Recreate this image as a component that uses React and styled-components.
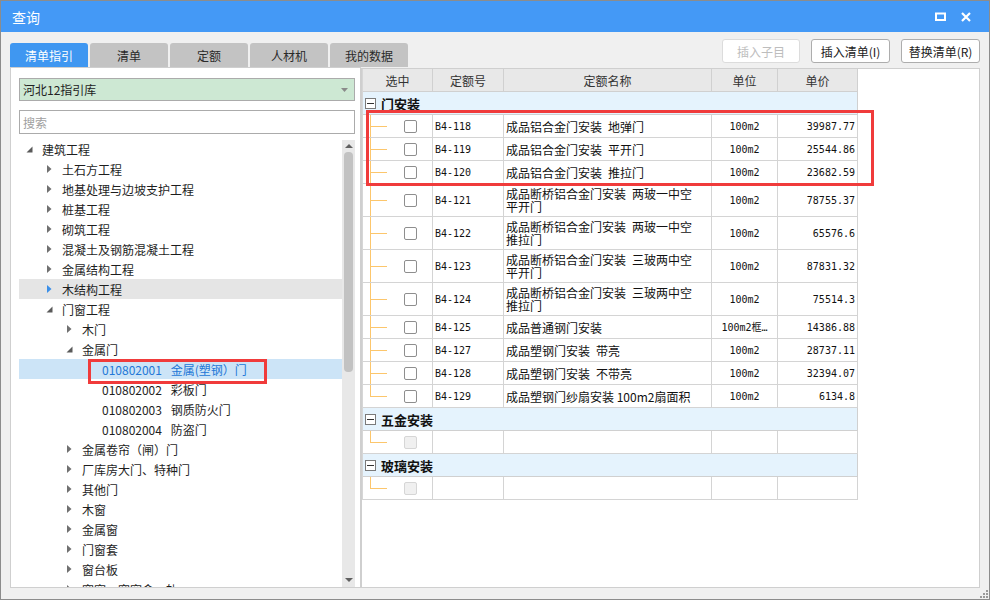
import React from "react";
import styled, { createGlobalStyle } from "styled-components";

const GlobalStyle = createGlobalStyle`
  html, body { margin: 0; padding: 0; background: #fff; }
  body {
    font-family: "Noto Sans CJK SC", "Noto Sans", sans-serif;
    font-size: 12px;
    color: #222;
  }
  * { box-sizing: border-box; }
`;

const MONO = `"DejaVu Sans Mono", "Noto Sans CJK SC", monospace`;

const Window = styled.div`
  position: relative;
  width: 990px;
  height: 600px;
  display: flex;
  flex-direction: column;
  background: #f0f0f0;
  border: 1px solid #8c8c8c;
  overflow: hidden;
`;

const TitleBar = styled.div`
  flex: none;
  height: 31px;
  display: flex;
  align-items: center;
  padding: 0 10px 0 11px;
  background: #4499f6;
  color: #fff;
  font-size: 14px;
`;

const Title = styled.div`
  flex: 1;
`;

const TitleBtn = styled.div`
  width: 26px;
  display: flex;
  justify-content: center;
  align-items: center;
`;

const Body = styled.div`
  flex: 1;
  display: flex;
  flex-direction: column;
  padding: 0 9px 11px 9px;
  min-height: 0;
`;

const TopRow = styled.div`
  flex: none;
  height: 35px;
  display: flex;
`;

const Tabs = styled.div`
  display: flex;
  align-self: flex-end;
  gap: 2px;
`;

const Tab = styled.div`
  width: 78px;
  height: 24px;
  display: flex;
  align-items: center;
  justify-content: center;
  border-radius: 3px 3px 0 0;
  background: ${(p) => (p.$active ? "#3f97f1" : "#c3c3c3")};
  color: ${(p) => (p.$active ? "#fff" : "#2a2a2a")};
  font-size: 12px;
`;

const Spacer = styled.div`
  flex: 1;
`;

const Button = styled.div`
  width: ${(p) => p.$w || 79}px;
  height: 24px;
  margin: 7px 0 0 11px;
  display: flex;
  align-items: center;
  justify-content: center;
  background: #fff;
  border: 1px solid ${(p) => (p.$disabled ? "#dcdcdc" : "#adadad")};
  border-radius: 3px;
  color: ${(p) => (p.$disabled ? "#bdbdbd" : "#222")};
  font-size: 12px;
`;

const Main = styled.div`
  flex: 1;
  display: flex;
  min-height: 0;
`;

const LeftPanel = styled.div`
  width: 351px;
  flex: none;
  display: flex;
  flex-direction: column;
  padding: 10px 5px 0 8px;
  background: #fff;
  border: 1px solid #cfcfcf;
  min-height: 0;
`;

const Select = styled.div`
  height: 23px;
  flex: none;
  display: flex;
  align-items: center;
  justify-content: space-between;
  padding: 0 6px 0 3px;
  background: #cde8d3;
  border: 1px solid #ababab;
  color: #222;
`;

const Search = styled.div`
  height: 24px;
  flex: none;
  margin-top: 9px;
  display: flex;
  align-items: center;
  padding-left: 3px;
  border: 1px solid #ababab;
  color: #a0a0a0;
`;

const TreeWrap = styled.div`
  flex: 1;
  display: flex;
  margin-top: 5px;
  min-height: 0;
`;

const Tree = styled.div`
  position: relative;
  flex: 1;
  overflow: hidden;
`;

const TreeRow = styled.div`
  height: 20px;
  display: flex;
  align-items: center;
  padding-left: ${(p) => p.$level * 20 + 4}px;
  white-space: pre;
  background: ${(p) => (p.$selected ? "#cce4f7" : p.$hover ? "#e5e5e5" : "transparent")};
  color: ${(p) => (p.$selected ? "#2377d6" : "#1e1e1e")};
`;

const Arrow = styled.span`
  width: 12px;
  flex: none;
  display: flex;
  justify-content: center;
  align-items: center;
  margin-right: 7px;
`;

const Scrollbar = styled.div`
  width: 13px;
  flex: none;
  margin-top: 1px;
  display: flex;
  flex-direction: column;
  background: #e8e8e8;
`;

const ScrollBtn = styled.div`
  height: ${(p) => p.$h}px;
  flex: none;
  display: flex;
  justify-content: center;
  align-items: center;
`;

const Thumb = styled.div`
  height: 220px;
  margin: 0 2px;
  border-radius: 4px;
  background: #c2c2c2;
`;

const RightPanel = styled.div`
  flex: 1;
  margin-top: 1px;
  background: #fff;
  border: 1px solid #cfcfcf;
  min-height: 0;
`;

const TableWrap = styled.div`
  position: relative;
  width: 496px;
  border-left: 1px solid #d6d6d6;
`;

const COLS = "70px 71px 208px 66px 80px";

const HeadRow = styled.div`
  display: grid;
  grid-template-columns: ${COLS};
  height: 23px;
`;

const HeadCell = styled.div`
  display: flex;
  align-items: center;
  justify-content: center;
  background: #e8e8e8;
  border-right: 1px solid #d0d0d0;
  border-bottom: 1px solid #d0d0d0;
  color: #333;
`;

const GroupRow = styled.div`
  height: 23px;
  display: flex;
  align-items: center;
  padding-left: 2px;
  background: #e5f3fd;
  border-right: 1px solid #d0d0d0;
  border-bottom: 1px solid #d0d0d0;
  font-size: 13px;
  font-weight: bold;
  color: #111;
`;

const MinusBox = styled.span`
  width: 11px;
  height: 11px;
  margin-right: 5px;
  display: flex;
  align-items: center;
  justify-content: center;
  border: 1px solid #7a7a7a;
  background: #fff;
  &::after {
    content: "";
    width: 7px;
    height: 1px;
    background: #333;
  }
`;

const Row = styled.div`
  display: grid;
  grid-template-columns: ${COLS};
  height: ${(p) => p.$h}px;
`;

const Cell = styled.div`
  display: flex;
  align-items: center;
  justify-content: ${(p) => p.$justify || "flex-start"};
  padding: 0 2px;
  border-right: 1px solid #d4d4d4;
  border-bottom: 1px solid #d4d4d4;
  font-family: ${(p) => (p.$mono ? MONO : "inherit")};
  font-size: ${(p) => (p.$mono ? "10px" : "12px")};
  line-height: 13px;
  white-space: pre-line;
  color: #111;
`;

const LINE = "#fcc66c";

const SelectCell = styled(Cell)`
  padding-left: 41px;
  background:
    linear-gradient(${LINE}, ${LINE}) no-repeat 7px 0 / 1px ${(p) => (p.$last ? "50%" : "100%")},
    linear-gradient(${LINE}, ${LINE}) no-repeat 7px 50% / 17px 1px;
`;

const Checkbox = styled.span`
  width: 13px;
  height: 13px;
  border-radius: 2px;
  border: 1px solid ${(p) => (p.$disabled ? "#d6d6d6" : "#8e8e8e")};
  background: ${(p) => (p.$disabled ? "#f0f0f0" : "#fff")};
`;

const Mark = styled.div`
  position: absolute;
  left: ${(p) => p.$x}px;
  top: ${(p) => p.$y}px;
  width: ${(p) => p.$w}px;
  height: ${(p) => p.$h}px;
  border: 3px solid #f03b3b;
  pointer-events: none;
`;

const Grip = styled.svg`
  position: absolute;
  right: 1px;
  bottom: 1px;
`;

const treeItems = [
  { level: 0, label: "建筑工程", state: "open" },
  { level: 1, label: "土石方工程", state: "closed" },
  { level: 1, label: "地基处理与边坡支护工程", state: "closed" },
  { level: 1, label: "桩基工程", state: "closed" },
  { level: 1, label: "砌筑工程", state: "closed" },
  { level: 1, label: "混凝土及钢筋混凝土工程", state: "closed" },
  { level: 1, label: "金属结构工程", state: "closed" },
  { level: 1, label: "木结构工程", state: "closed", hover: true },
  { level: 1, label: "门窗工程", state: "open" },
  { level: 2, label: "木门", state: "closed" },
  { level: 2, label: "金属门", state: "open" },
  { level: 3, label: "010802001\u2002 金属(塑钢）门", selected: true },
  { level: 3, label: "010802002\u2002 彩板门" },
  { level: 3, label: "010802003\u2002 钢质防火门" },
  { level: 3, label: "010802004\u2002 防盗门" },
  { level: 2, label: "金属卷帘（闸）门", state: "closed" },
  { level: 2, label: "厂库房大门、特种门", state: "closed" },
  { level: 2, label: "其他门", state: "closed" },
  { level: 2, label: "木窗", state: "closed" },
  { level: 2, label: "金属窗", state: "closed" },
  { level: 2, label: "门窗套", state: "closed" },
  { level: 2, label: "窗台板", state: "closed" },
  { level: 2, label: "窗帘、窗帘盒、轨", state: "closed" },
];

const doorRows = [
  { code: "B4-118", name: "成品铝合金门安装\u2002地弹门", unit: "100m2", price: "39987.77" },
  { code: "B4-119", name: "成品铝合金门安装\u2002平开门", unit: "100m2", price: "25544.86" },
  { code: "B4-120", name: "成品铝合金门安装\u2002推拉门", unit: "100m2", price: "23682.59" },
  { code: "B4-121", name: "成品断桥铝合金门安装\u2002两玻一中空\n平开门", unit: "100m2", price: "78755.37" },
  { code: "B4-122", name: "成品断桥铝合金门安装\u2002两玻一中空\n推拉门", unit: "100m2", price: "65576.6" },
  { code: "B4-123", name: "成品断桥铝合金门安装\u2002三玻两中空\n平开门", unit: "100m2", price: "87831.32" },
  { code: "B4-124", name: "成品断桥铝合金门安装\u2002三玻两中空\n推拉门", unit: "100m2", price: "75514.3" },
  { code: "B4-125", name: "成品普通钢门安装", unit: "100m2框…", price: "14386.88" },
  { code: "B4-127", name: "成品塑钢门安装\u2002带亮", unit: "100m2", price: "28737.11" },
  { code: "B4-128", name: "成品塑钢门安装\u2002不带亮", unit: "100m2", price: "32394.07" },
  { code: "B4-129", name: "成品塑钢门纱扇安装 100m2扇面积", unit: "100m2", price: "6134.8" },
];

function TreeArrow({ state, hover }) {
  if (state === "open") {
    return (
      <svg width="7" height="7" viewBox="0 0 7 7">
        <polygon points="6.5,0.5 6.5,6.5 0.5,6.5" fill="#5a5a5a" />
      </svg>
    );
  }
  if (state === "closed") {
    return (
      <svg width="5" height="8" viewBox="0 0 5 8">
        <polygon points="0,0 4.5,4 0,8" fill={hover ? "#3b8fe8" : "#707070"} />
      </svg>
    );
  }
  return null;
}

function DataRow({ row, last }) {
  const tall = row.name.includes("\n");
  return (
    <Row $h={tall ? 33 : 23}>
      <SelectCell $last={last}>
        <Checkbox />
      </SelectCell>
      <Cell $mono>{row.code}</Cell>
      <Cell>{row.name}</Cell>
      <Cell $mono $justify="center">{row.unit}</Cell>
      <Cell $mono $justify="flex-end">{row.price}</Cell>
    </Row>
  );
}

function EmptyRow() {
  return (
    <Row $h={23}>
      <SelectCell $last>
        <Checkbox $disabled />
      </SelectCell>
      <Cell />
      <Cell />
      <Cell />
      <Cell />
    </Row>
  );
}

export default function App() {
  return (
    <>
      <GlobalStyle />
      <Window>
        <TitleBar>
          <Title>查询</Title>
          <TitleBtn>
            <svg width="11" height="9" viewBox="0 0 11 9">
              <rect x="1" y="1.5" width="9" height="6.5" fill="none" stroke="#fff" strokeWidth="2" />
            </svg>
          </TitleBtn>
          <TitleBtn>
            <svg width="10" height="10" viewBox="0 0 10 10">
              <path d="M1 1 L9 9 M9 1 L1 9" stroke="#fff" strokeWidth="2.2" />
            </svg>
          </TitleBtn>
        </TitleBar>
        <Body>
          <TopRow>
            <Tabs>
              <Tab $active>清单指引</Tab>
              <Tab>清单</Tab>
              <Tab>定额</Tab>
              <Tab>人材机</Tab>
              <Tab>我的数据</Tab>
            </Tabs>
            <Spacer />
            <Button $disabled $w={78}>插入子目</Button>
            <Button>插入清单(I)</Button>
            <Button>替换清单(R)</Button>
          </TopRow>
          <Main>
            <LeftPanel>
              <Select>
                <span>河北12指引库</span>
                <svg width="7" height="4" viewBox="0 0 7 4">
                  <polygon points="0,0 7,0 3.5,4" fill="#8a8a8a" />
                </svg>
              </Select>
              <Search>搜索</Search>
              <TreeWrap>
                <Tree>
                  {treeItems.map((it, i) => (
                    <TreeRow key={i} $level={it.level} $hover={it.hover} $selected={it.selected}>
                      <Arrow>
                        <TreeArrow state={it.state} hover={it.hover} />
                      </Arrow>
                      {it.label}
                    </TreeRow>
                  ))}
                  <Mark $x={69} $y={220} $w={179} $h={25} />
                </Tree>
                <Scrollbar>
                  <ScrollBtn $h={12}>
                    <svg width="8" height="4" viewBox="0 0 8 4">
                      <polygon points="0,4 8,4 4,0" fill="#606060" />
                    </svg>
                  </ScrollBtn>
                  <Thumb />
                  <Spacer />
                  <ScrollBtn $h={14}>
                    <svg width="8" height="4" viewBox="0 0 8 4">
                      <polygon points="0,0 8,0 4,4" fill="#606060" />
                    </svg>
                  </ScrollBtn>
                </Scrollbar>
              </TreeWrap>
            </LeftPanel>
            <RightPanel>
              <TableWrap>
                <HeadRow>
                  <HeadCell>选中</HeadCell>
                  <HeadCell>定额号</HeadCell>
                  <HeadCell>定额名称</HeadCell>
                  <HeadCell>单位</HeadCell>
                  <HeadCell>单价</HeadCell>
                </HeadRow>
                <GroupRow>
                  <MinusBox />
                  门安装
                </GroupRow>
                {doorRows.map((r, i) => (
                  <DataRow key={r.code} row={r} last={i === doorRows.length - 1} />
                ))}
                <GroupRow>
                  <MinusBox />
                  五金安装
                </GroupRow>
                <EmptyRow />
                <GroupRow>
                  <MinusBox />
                  玻璃安装
                </GroupRow>
                <EmptyRow />
                <Mark $x={3} $y={41} $w={508} $h={76} />
              </TableWrap>
            </RightPanel>
          </Main>
        </Body>
        <Grip width="8" height="8" viewBox="0 0 8 8">
          <g fill="#9a9a9a">
            <rect x="6" y="0" width="2" height="2" />
            <rect x="3" y="3" width="2" height="2" />
            <rect x="6" y="3" width="2" height="2" />
            <rect x="0" y="6" width="2" height="2" />
            <rect x="3" y="6" width="2" height="2" />
            <rect x="6" y="6" width="2" height="2" />
          </g>
        </Grip>
      </Window>
    </>
  );
}
